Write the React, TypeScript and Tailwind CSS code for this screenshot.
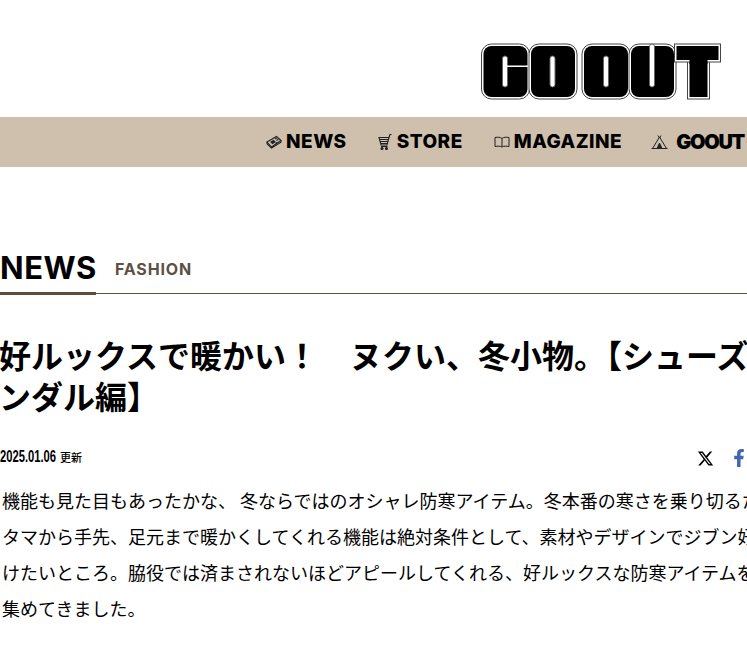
import { FaFacebookF } from 'react-icons/fa';
import { FaXTwitter } from 'react-icons/fa6';

const latin = "font-['Inter','Liberation_Sans',sans-serif]";

function LogoBlock({ x, y = 1, w, h = 55, r = 10 }: { x: number; y?: number; w: number; h?: number; r?: number }) {
  return (
    <>
      <rect x={x} y={y} width={w} height={h} rx={r} fill="#fff" stroke="#444" strokeWidth="1" />
      <rect x={x + 2} y={y + 2} width={w - 4} height={h - 4} rx={Math.max(r - 2, 0)} fill="#000" />
    </>
  );
}

function LogoSlit({ x, y = 13, h = 31 }: { x: number; y?: number; h?: number }) {
  return <rect x={x} y={y} width="5" height={h} rx="2.500" fill="#fff" stroke="#666" strokeWidth="1" />;
}

function GoOutLogo() {
  return (
    <svg width="241" height="58" viewBox="0 0 241 58" aria-label="GO OUT" role="img">
      <LogoBlock x={0.5} w={48} />
      <LogoSlit x={21.500} />
      <rect x="25" y="22.500" width="23" height="1.500" fill="#fff" />
      <LogoBlock x={48} w={48} />
      <LogoSlit x={69} />
      <LogoBlock x={101} w={48} />
      <LogoSlit x={122.500} />
      <LogoBlock x={148} w={47} />
      <LogoSlit x={168.500} y={1} h={43} />
      <LogoBlock x={206.500} y={10} w={22} h={46} r={0} />
      <LogoBlock x={193.500} w={46} h={18} r={0} />
      <rect x="208.500" y="12" width="18" height="9" fill="#000" />
    </svg>
  );
}

function NewsIcon() {
  return (
    <svg width="16" height="15" viewBox="0 0 16 15" fill="none" stroke="#222" strokeWidth="1.100">
      <path d="M1 7 10.500 1.500 15 5.500 5.500 12Z" />
      <path d="M1 7v1.700l4.500 4.300L15 7.300V5.500" />
      <path d="m5 7 2.500-1.500L9 7 6.500 8.500Z" fill="#222" />
      <path d="m9 4 2-1M10.500 5.500l2-1.200M9.500 8.500l2-1.300" />
    </svg>
  );
}

function CartIcon() {
  return (
    <svg width="14" height="16" viewBox="0 0 14 16" fill="none" stroke="#222" strokeWidth="1.100">
      <path d="M.5 3.500h10.500l1-3h1.500" />
      <path d="M1.500 5.500h9M2 7.500h8M2.800 9.500h6.600" />
      <path d="m1 3.500 2 7.500h6L11 3.500" />
      <path d="M3 12.500h6.500" />
      <circle cx="4" cy="14.500" r="1" fill="#222" />
      <circle cx="8.500" cy="14.500" r="1" fill="#222" />
    </svg>
  );
}

function BookIcon() {
  return (
    <svg width="16" height="12" viewBox="0 0 16 12" fill="none" stroke="#222" strokeWidth="1">
      <path d="M8 2.500C6.500 1 3.500 1 1 1.500v9c2.500-.5 5.500-.5 7 .5 1.500-1 4.500-1 7-.5v-9C12.500 1 9.500 1 8 2.500Z" />
      <path d="M8 2.500V11" />
    </svg>
  );
}

function TentIcon() {
  return (
    <svg width="17" height="15" viewBox="0 0 17 15" fill="none" stroke="#222" strokeWidth="1">
      <path d="M8.500 2 15.500 13.500H1.500Z" />
      <path d="M.5 13.500h16" />
      <path d="M8.500 8 6 13.500h5Z" fill="#222" />
      <path d="M7 .5 8.500 3 10 .5" />
    </svg>
  );
}

function NavItem({ icon, label, gap }: { icon: React.ReactNode; label: string; gap: string }) {
  return (
    <a className={`flex shrink-0 items-center ${gap}`}>
      {icon}
      <span className={`${latin} text-[19px] font-extrabold tracking-[0.5px] text-black`}>{label}</span>
    </a>
  );
}

export default function App() {
  return (
    <div className="h-[648px] w-[747px] overflow-hidden bg-white font-['Noto_Sans_CJK_JP',sans-serif] text-black">
      <header>
        <div className="flex h-[117px] items-start pl-[481px] pt-[43px]">
          <GoOutLogo />
        </div>
        <nav className="flex h-[50px] items-center whitespace-nowrap bg-[#cfbfad] pl-[266px]">
          <NavItem icon={<NewsIcon />} label="NEWS" gap="gap-[4px]" />
          <div className="ml-[31px]">
            <NavItem icon={<CartIcon />} label="STORE" gap="gap-[5px]" />
          </div>
          <div className="ml-[31px]">
            <NavItem icon={<BookIcon />} label="MAGAZINE" gap="gap-[4px]" />
          </div>
          <a className="ml-[29px] flex shrink-0 items-center gap-[8px]">
            <TentIcon />
            <span className={`${latin} text-[20px] font-black tracking-[-1.300px]`}>GOOUT CAMP</span>
          </a>
        </nav>
      </header>

      <main className="pt-[81px]">
        <div className="flex h-[46px] items-start border-b border-[#5e5044]">
          <h2 className="h-[47px] w-[96px] shrink-0 border-b-[3px] border-[#5e4c38] text-[31px] leading-[36px] font-bold tracking-[0.5px]">
            <span className={latin}>NEWS</span>
          </h2>
          <span className={`${latin} ml-[19px] pt-[9px] text-[16px] leading-[24px] font-bold tracking-[0.85px] text-[#5e5044]`}>FASHION</span>
        </div>

        <h1 className="-ml-px mt-[40px] w-[832px] text-[32px] leading-[41px] font-bold">
          好ルックスで暖かい！　ヌクい、冬小物。【シューズ＆サンダル編】
        </h1>

        <div className="mt-[27px] flex h-[30px] items-center justify-between">
          <p className="flex items-baseline gap-[4px] pb-[2px] font-bold">
            <span className="inline-block w-[56px] origin-left scale-x-[0.7] whitespace-nowrap font-['Liberation_Sans',sans-serif] text-[16px]">2025.01.06</span>
            <span className="text-[11px] font-medium">更新</span>
          </p>
          <div className="flex w-[50px] shrink-0 items-center gap-[16px] overflow-hidden">
            <FaXTwitter size={17} className="shrink-0" />
            <FaFacebookF size={18} className="shrink-0 text-[#4267b2]" />
          </div>
        </div>

        <div className="mt-[9px] whitespace-nowrap pl-[2px] text-[18px] leading-[36px]">
          <p>機能も見た目もあったかな、 冬ならではのオシャレ防寒アイテム。冬本番の寒さを乗り切るた</p>
          <p>タマから手先、足元まで暖かくしてくれる機能は絶対条件として、素材やデザインでジブン好</p>
          <p>けたいところ。脇役では済まされないほどアピールしてくれる、好ルックスな防寒アイテムを</p>
          <p>集めてきました。</p>
        </div>
      </main>
    </div>
  );
}
